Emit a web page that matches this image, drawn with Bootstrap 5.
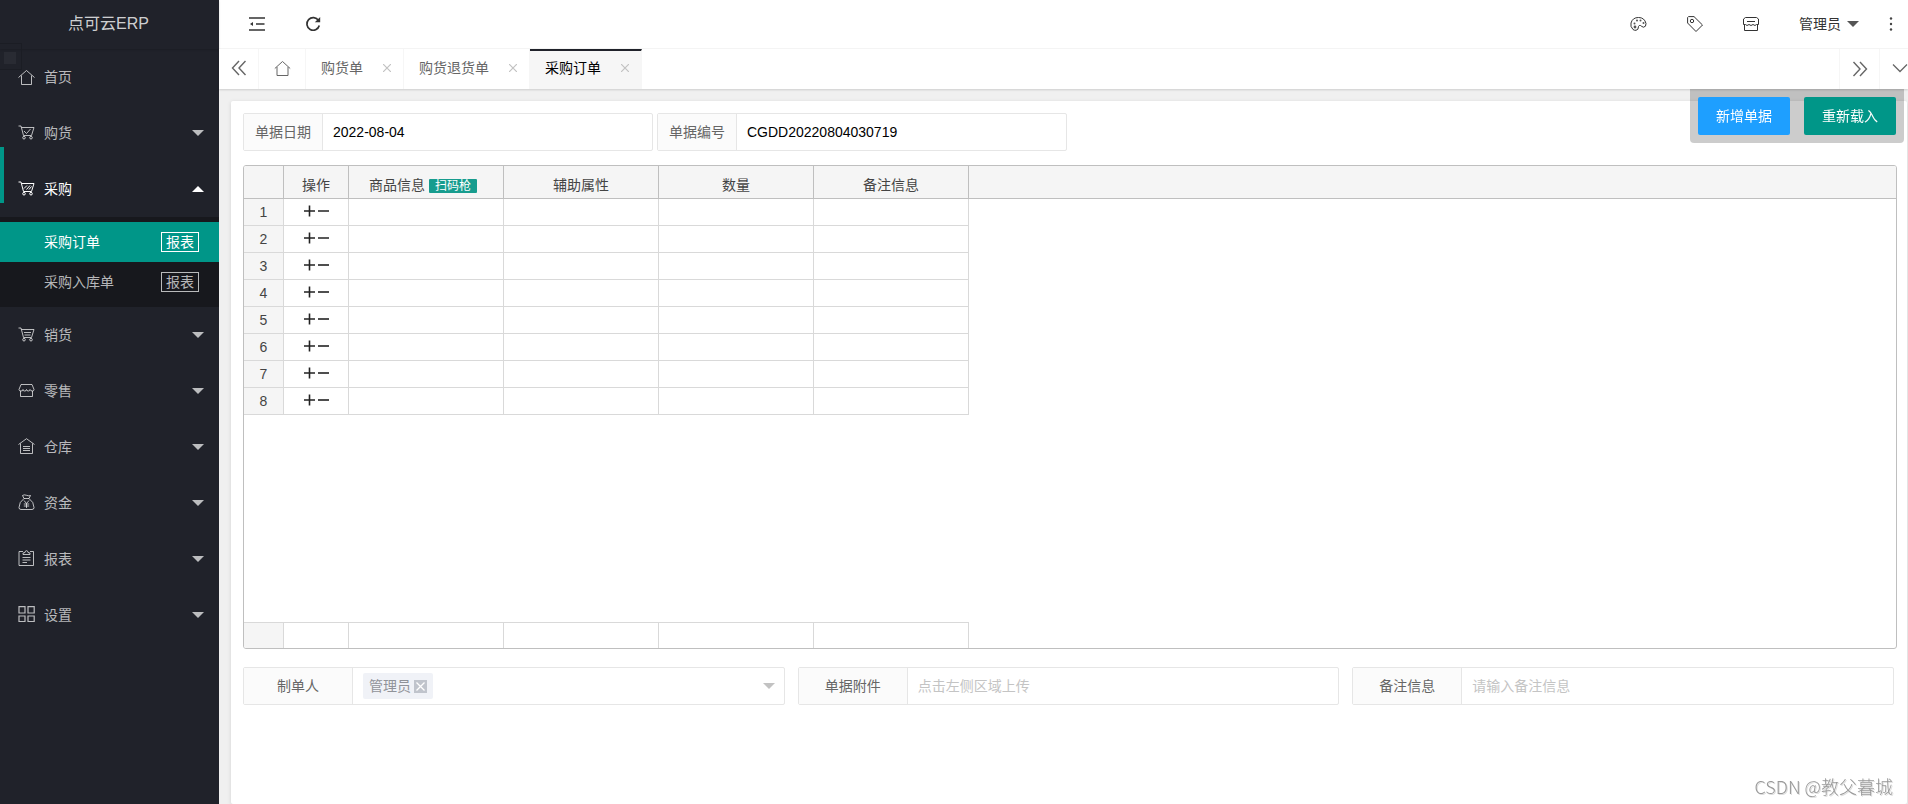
<!DOCTYPE html>
<html lang="zh-CN">
<head>
<meta charset="utf-8">
<meta name="viewport" content="width=device-width, initial-scale=1">
<title>点可云ERP</title>
<link href="https://cdn.jsdelivr.net/npm/bootstrap@5.3.0/dist/css/bootstrap.min.css" rel="stylesheet">
<style>
:root { --side:#20222a; --teal:#009688; --line:#e6e6e6; --grid:#d9d9d9; --grid-dark:#bfbfbf; }
body { font:14px/20px "Liberation Sans","Noto Sans CJK SC",sans-serif; color:#333; background:#f0f0f0; overflow:hidden; }
svg { display:block; fill:none; stroke:currentColor; }
button { background:none; border:0; padding:0; color:inherit; line-height:20px; }
a { color:inherit; text-decoration:none; }

.side { width:219px; background:var(--side); color:rgba(255,255,255,.7); position:relative; }
.brand-title { height:49px; font-size:16px; padding:0 2px 2px 0; box-shadow:0 1px 2px rgba(0,0,0,.15); color:rgba(255,255,255,.8); }
.side-link { height:56px; padding:0 15px 0 18px; position:relative; }
.side-link svg { margin-bottom:2px; }
.side-link span { margin-left:9px; }
.side-link.open { color:#fff; }
.side-link.open::before { content:""; position:absolute; left:0; top:-14px; width:4px; height:56px; background:var(--teal); }
.arrow { width:0; height:0; border:6px solid transparent; border-top-color:currentColor; border-bottom:0; }
.arrow.up { border-top:0; border-bottom:6px solid currentColor; }
.sub { background:#17181d; padding:5px 0; }
.sub-item { height:40px; padding:0 20px 0 44px; }
.sub-item.on { background:var(--teal); color:#fff; }
.sub-item .report { width:38px; height:20px; border:1px solid currentColor; line-height:18px; text-align:center; }
.ghost { position:absolute; left:0; top:43px; width:22px; height:27px; border:1px solid #1b1d24; border-left:0; padding:8px 4px; }
.ghost i { display:block; width:12px; height:12px; background:#292b33; }

.topbar { height:49px; padding:0 9px 9px 30px; background:#fff; border-bottom:1px solid #f6f6f6; }
.topbar .tools { gap:40px; }
.topbar .user .arrow { color:#555; margin-left:6px; }
.tabs { height:40px; background:#fff; box-shadow:0 1px 2px rgba(0,0,0,.15); color:#666; position:relative; }
.tabs > * { border-right:1px solid #f6f6f6; height:40px; flex:none; }
.tab-side { width:40px; }
.tab-home { width:47px; }
.tab-page { padding:0 12px 2px 15px; gap:20px; }
.tab-page button { color:#c2c2c2; }
.tabs .on { background:#f6f6f6; color:#000; border-top:2px solid var(--side); padding-bottom:4px; }
.tabs .tab-next { border-left:1px solid #f6f6f6; width:41px; }
.tabs .tab-more { width:28px; border:0; padding-left:12px; overflow:hidden; }
.tab-side, .tab-home, .tab-more { padding-bottom:2px; }

.panel { background:#fff; margin:12px 1px 0 12px; padding:12px 10px 0 12px; border-radius:2px; box-shadow:0 1px 4px rgba(0,0,0,.12); }
.field { height:38px; border:1px solid var(--line); border-radius:2px; color:#666; background:#fff; }
.field label, .field .cap { background:#fbfbfb; border-right:1px solid var(--line); text-align:center; line-height:36px; flex:none; width:79px; }
.field input { border:0; outline:0; padding:0 10px; min-width:0; flex:1; color:#000; background:none; }
.field input::placeholder { color:#c4c4c4; opacity:1; }
.field.head { width:410px; }
.bottom-fields { gap:13px; margin:18px 3px 0 0; }
.bottom-fields .field { flex:1 1 0; min-width:0; }
.bottom-fields label, .bottom-fields .cap { width:109px; }
.chosen { margin-left:10px; height:26px; padding:0 6px; gap:3px; background:#f0f2f7; color:#909399; border-radius:2px; }
.chosen button { width:13px; height:13px; background:#c0c4cc; color:#fff; }
.field .arrow { margin-right:9px; color:#c2c2c2; }

.sheet { height:calc(100vh - 320px); min-height:280px; margin-top:14px; border:1px solid var(--grid-dark); border-radius:3px; overflow:hidden; }
.sheet table { width:100%; table-layout:fixed; border-collapse:separate; border-spacing:0; text-align:center; }
.sheet th, .sheet td { padding:0; font-weight:400; line-height:20px; border-right:1px solid var(--grid); }
.sheet thead th { height:33px; padding-top:5px; background:#f5f5f5; border-color:var(--grid-dark); border-bottom:1px solid var(--grid-dark); color:#444; }
.sheet tbody :is(th,td) { height:27px; border-bottom:1px solid var(--grid); }
.sheet tfoot td { height:26px; border-top:1px solid var(--grid); }
.sheet tr > :first-child { background:#f5f5f5; color:#444; }
.sheet tr > :last-child { border-right:0; }
.sheet :is(tbody,tfoot) tr > :last-child { border-top:0; border-bottom:0; }
.c-no { width:40px; } .c-op { width:65px; } .c-data { width:155px; }
.ops { gap:2px; color:#222; padding:0 0 2px 2px; }
.scan { background:#179c8e; color:#fff; font-size:12px; line-height:14px; height:14px; width:48px; border-radius:1px; vertical-align:0; margin-right:6px; }

.float-actions { position:fixed; right:4px; top:89px; padding:8px; gap:14px; background:rgba(0,0,0,.2); border-radius:0 0 4px 4px; }
.float-actions .btn { width:92px; height:38px; font-size:14px; line-height:20px; padding:0; border:0; border-radius:2px; color:#fff; }
.b-add { background:#1e9fff; } .b-load { background:var(--teal); }
.credit { position:fixed; right:15px; bottom:5px; font-family:"Noto Sans CJK SC",sans-serif; font-size:18px; line-height:26px; font-weight:300; color:#999; text-shadow:1px 1px 0 #ddd; }
</style>
</head>
<body>
<div class="d-flex vh-100">
  <nav class="side flex-shrink-0" aria-label="主菜单">
    <div class="brand-title d-flex align-items-center justify-content-center">点可云ERP</div>
    <div class="ghost"><i></i></div>
    <a href="#" class="side-link d-flex align-items-center">
      <svg width="17" height="17" viewBox="0 0 17 17"><path d="M.5 9.500 8.500 2.500 16.500 9.500M3.500 7.500V16.500H13.500V7.500"/></svg><span>首页</span></a>
    <a href="#" class="side-link d-flex align-items-center">
      <svg width="17" height="17" viewBox="0 0 17 17"><path d="M.5 2H3L5.500 11.500H13.500L16 3.500H3.500M6 7l2.500 2.500L12.500 5"/><circle cx="6" cy="13.700" r="1.300"/><circle cx="13" cy="13.700" r="1.300"/></svg><span>购货</span><i class="arrow ms-auto"></i></a>
    <a href="#" class="side-link open d-flex align-items-center">
      <svg width="17" height="17" viewBox="0 0 17 17"><path d="M.5 2H3L5.500 11.500H13.500L16 3.500H3.500M6 8.500 9 5.500M8.500 9.500 12 5.500M11 9.500 13.500 6.500"/><circle cx="6" cy="13.700" r="1.300"/><circle cx="13" cy="13.700" r="1.300"/></svg><span>采购</span><i class="arrow up ms-auto"></i></a>
    <div class="sub">
      <div class="sub-item on d-flex align-items-center justify-content-between"><a href="#">采购订单</a><a href="#" class="report">报表</a></div>
      <div class="sub-item d-flex align-items-center justify-content-between"><a href="#">采购入库单</a><a href="#" class="report">报表</a></div>
    </div>
    <a href="#" class="side-link d-flex align-items-center">
      <svg width="17" height="17" viewBox="0 0 17 17"><path d="M.5 2H3L5.500 11.500H13.500L16 3.500H3.500M6 6.500H13M6.500 9H12.500"/><circle cx="6" cy="13.700" r="1.300"/><circle cx="13" cy="13.700" r="1.300"/></svg><span>销货</span><i class="arrow ms-auto"></i></a>
    <a href="#" class="side-link d-flex align-items-center">
      <svg width="17" height="17" viewBox="0 0 17 17"><path d="M3 2.500H14L16 7.500Q16 9 14.300 9T12 7.500Q12 9 10.300 9T8.500 7.500Q8.500 9 6.700 9T5 7.500Q5 9 3 9T1 7.500ZM2.500 9V14.500H14.500V9"/></svg><span>零售</span><i class="arrow ms-auto"></i></a>
    <a href="#" class="side-link d-flex align-items-center">
      <svg width="17" height="17" viewBox="0 0 17 17"><path d="M.5 6.500 8.500 .7 16.500 6.500M2.500 5.500V15.500H14.500V5.500M5 8.500H12M5 10.500H12M5 12.500H12"/></svg><span>仓库</span><i class="arrow ms-auto"></i></a>
    <a href="#" class="side-link d-flex align-items-center">
      <svg width="17" height="17" viewBox="0 0 17 17"><path d="M6 4.500 4.500 1.500Q6 .3 8.500 1.300T12.500 1.500L11 4.500ZM6 4.500Q1 8 1 13.500Q1 15.500 3 15.500H14Q16 15.500 16 13.500Q16 8 11 4.500M6 6.500 8.500 9.500 11 6.500M8.500 9.500V14M5.800 10H11.200M5.800 12H11.200"/></svg><span>资金</span><i class="arrow ms-auto"></i></a>
    <a href="#" class="side-link d-flex align-items-center">
      <svg width="17" height="17" viewBox="0 0 17 17"><path d="M5 1.500H1V15.500H15.500V1.500H12M5 4.500V3L7 2.500Q7 .7 8.500 .7T10 2.500L12 3V4.500ZM4.500 7.500H12.500M4.500 10H12.500M4.500 12.500H9"/></svg><span>报表</span><i class="arrow ms-auto"></i></a>
    <a href="#" class="side-link d-flex align-items-center">
      <svg width="17" height="17" viewBox="0 0 17 17" stroke-width="1.200"><path d="M1 .7H7V7H1ZM10 .7H16.200V7H10ZM1 10H7V15.500H1ZM10 10H16.200V15.500H10Z"/></svg><span>设置</span><i class="arrow ms-auto"></i></a>
  </nav>

  <main class="flex-grow-1 d-flex flex-column" style="min-width:0">
    <header class="topbar d-flex align-items-center justify-content-between">
      <div class="tools d-flex align-items-center pt-2">
        <button aria-label="收起菜单"><svg width="16" height="16" viewBox="0 0 16 16" stroke-width="1.600"><path d="M0 2H16M7 8H15.500M0 14H16"/><path d="M1 8 4 6V10Z" fill="currentColor" stroke="none"/></svg></button>
        <button aria-label="刷新"><svg width="16" height="16" viewBox="0 0 16 16" stroke-width="1.700"><path d="M13.500 4.500A6.300 6.300 0 1 0 14.300 9.500"/><path d="M15.200 1V6.300H9.800Z" fill="currentColor" stroke="none"/></svg></button>
      </div>
      <div class="tools d-flex align-items-center pt-2">
        <button aria-label="主题"><svg width="17" height="16" viewBox="0 0 17 16" stroke="#555"><path d="M3 13.500Q0 10.500 1 7Q2.500 1.500 8.500 1.500T16 7.500Q16.200 11 13.500 11.200Q11.500 10.500 10.500 9.500Q9 9 8.500 10.500Q8.500 14 6 14.300Q4.300 14.500 3 13.500Z"/><g fill="#555" stroke="none"><circle cx="4.500" cy="7.500" r="1"/><circle cx="7" cy="4.500" r="1"/><circle cx="10.500" cy="4.500" r="1"/><circle cx="13.500" cy="7" r="1"/><circle cx="5" cy="11" r="1.400"/></g></svg></button>
        <button aria-label="标签"><svg width="16" height="16" viewBox="0 0 16 16" stroke="#555"><path d="M.6 1.500 1.500.6H7L15.500 9 9 15.500.6 7Z"/><circle cx="5" cy="5" r="1.700"/></svg></button>
        <button aria-label="便签"><svg width="16" height="16" viewBox="0 0 16 16" stroke="#666"><path d="M2.500 1.500H13.500L15.500 3V8.500H13.500L12 9.500 10 8.500 8 9.500 6 8.500 4 9.500 2.500 8.500H.5V3ZM1.500 9V14.500H14.500V9M4 5.500H12"/></svg></button>
        <div class="user d-flex align-items-center">
          <button class="d-flex align-items-center">管理员<i class="arrow"></i></button>
          <button class="ms-4" aria-label="更多"><svg width="16" height="16" viewBox="0 0 16 16"><g fill="#444" stroke="none"><circle cx="8" cy="2.500" r="1.200"/><circle cx="8" cy="8" r="1.200"/><circle cx="8" cy="13.500" r="1.200"/></g></svg></button>
        </div>
      </div>
    </header>

    <div class="tabs d-flex">
      <button class="tab-side d-flex align-items-center justify-content-center" aria-label="向左"><svg width="16" height="16" viewBox="0 0 16 16" stroke-width="1.400"><path d="M8 1 1.500 8 8 15M14.500 1 8 8 14.500 15"/></svg></button>
      <a href="#" class="tab-home d-flex align-items-center justify-content-center" aria-label="首页"><svg width="17" height="17" viewBox="0 0 17 17"><path d="M.8 8.500 8.500 1.500 16.200 8.500M3 7V15.500H14V7"/></svg></a>
      <div class="tab-page d-flex align-items-center"><a href="#">购货单</a><button aria-label="关闭"><svg width="8" height="8" viewBox="0 0 8 8" stroke-width="1.200"><path d="M0 0 8 8M8 0 0 8"/></svg></button></div>
      <div class="tab-page d-flex align-items-center"><a href="#">购货退货单</a><button aria-label="关闭"><svg width="8" height="8" viewBox="0 0 8 8" stroke-width="1.200"><path d="M0 0 8 8M8 0 0 8"/></svg></button></div>
      <div class="tab-page on d-flex align-items-center"><a href="#">采购订单</a><button aria-label="关闭"><svg width="8" height="8" viewBox="0 0 8 8" stroke-width="1.200"><path d="M0 0 8 8M8 0 0 8"/></svg></button></div>
      <button class="tab-next ms-auto d-flex align-items-center justify-content-center" aria-label="向右"><svg width="16" height="16" viewBox="0 0 16 16" stroke-width="1.400"><path d="M1.500 1 8 8 1.500 15M8 1 14.500 8 8 15"/></svg></button>
      <button class="tab-more d-flex align-items-center" aria-label="标签操作"><svg class="flex-shrink-0" width="16" height="16" viewBox="0 0 16 16" stroke-width="1.300"><path d="M1 4.500 8 11.500 15 4.500"/></svg></button>
    </div>

    <section class="panel flex-grow-1">
      <div class="d-flex gap-1">
        <div class="field head d-flex"><label for="date">单据日期</label><input id="date" type="text" value="2022-08-04"></div>
        <div class="field head d-flex"><label for="number">单据编号</label><input id="number" type="text" value="CGDD20220804030719"></div>
      </div>

      <div class="sheet d-flex flex-column justify-content-between">
        <table>
          <colgroup><col class="c-no"><col class="c-op"><col class="c-data"><col class="c-data"><col class="c-data"><col class="c-data"><col></colgroup>
          <thead><tr><th></th><th>操作</th><th>商品信息 <button class="scan">扫码枪</button></th><th>辅助属性</th><th>数量</th><th>备注信息</th><th></th></tr></thead>
          <tbody id="rows"></tbody>
        </table>
        <table>
          <colgroup><col class="c-no"><col class="c-op"><col class="c-data"><col class="c-data"><col class="c-data"><col class="c-data"><col></colgroup>
          <tfoot><tr><td></td><td></td><td></td><td></td><td></td><td></td><td></td></tr></tfoot>
        </table>
      </div>

      <div class="bottom-fields d-flex">
        <div class="field d-flex align-items-center" role="group" aria-labelledby="maker">
          <span class="cap" id="maker">制单人</span>
          <span class="chosen d-flex align-items-center">管理员<button class="d-flex align-items-center justify-content-center" aria-label="移除"><svg width="9" height="9" viewBox="0 0 9 9" stroke-width="1.300"><path d="M.5.5 8.500 8.500M8.500.5.5 8.500"/></svg></button></span>
          <button class="arrow ms-auto" aria-label="选择制单人"></button>
        </div>
        <div class="field d-flex"><label for="file">单据附件</label><input id="file" type="text" placeholder="点击左侧区域上传"></div>
        <div class="field d-flex"><label for="note">备注信息</label><input id="note" type="text" placeholder="请输入备注信息"></div>
      </div>
    </section>
  </main>
</div>

<div class="float-actions d-flex"><button class="btn b-add">新增单据</button><button class="btn b-load">重新载入</button></div>
<div class="credit">CSDN @教父暮城</div>

<script src="https://cdn.jsdelivr.net/npm/bootstrap@5.3.0/dist/js/bootstrap.bundle.min.js"></script>
<script>
const plus = '<button aria-label="增加"><svg width="12" height="12" viewBox="0 0 12 12" stroke-width="1.600"><path d="M0 6H11M5.500.5V11.500"/></svg></button>';
const minus = '<button aria-label="删除"><svg width="12" height="12" viewBox="0 0 12 12" stroke-width="1.600"><path d="M0 6H11"/></svg></button>';
document.getElementById('rows').innerHTML = Array.from({length: 8}, (_, i) =>
  `<tr><th>${i + 1}</th><td><div class="ops d-flex justify-content-center">${plus}${minus}</div></td>${'<td></td>'.repeat(5)}</tr>`).join('');
</script>
</body>
</html>
